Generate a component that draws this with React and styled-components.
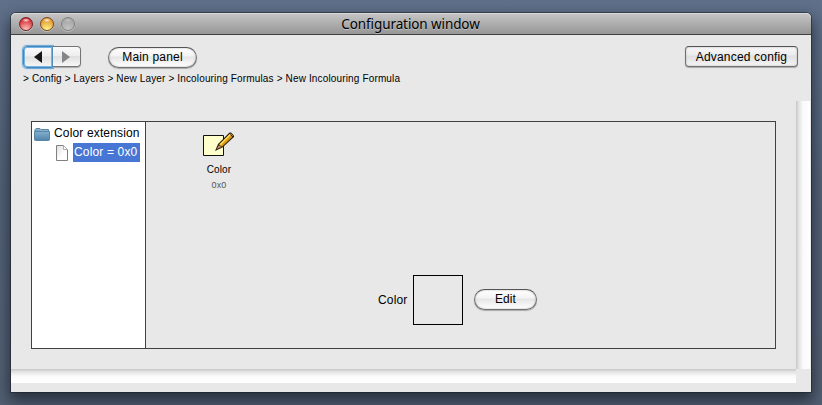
import React from "react";
import styled, { createGlobalStyle } from "styled-components";

const GlobalStyle = createGlobalStyle`
  * { box-sizing: border-box; }
  body {
    margin: 0;
    overflow: hidden;
    font-family: "Liberation Sans", Arial, sans-serif;
    font-size: 12px;
    color: #000;
  }
`;

const Desktop = styled.main`
  width: 822px;
  height: 405px;
  padding: 13px 11px;
  overflow: hidden;
  background: linear-gradient(#60708a, #556379 45%, #536074);
`;

const Window = styled.section`
  width: 800px;
  height: 379px;
  display: flex;
  flex-direction: column;
  background: #e8e8e8;
  border-radius: 5px 5px 0 0;
  box-shadow: 0 0 0 1px rgba(25, 32, 42, 0.55), 0 7px 15px 2px rgba(12, 18, 24, 0.62);
`;

const TitleBar = styled.header`
  flex: none;
  height: 22px;
  display: grid;
  grid-template-columns: 64px 1fr 64px;
  align-items: center;
  border-radius: 5px 5px 0 0;
  border-bottom: 1px solid #404040;
  background: linear-gradient(#c6c6c6, #969696);
  box-shadow: inset 0 1px #dadada;
`;

const Lights = styled.div`
  display: flex;
  gap: 7px;
  padding-left: 8px;
`;

const Light = styled.i`
  width: 14px;
  height: 14px;
  border-radius: 50%;
  border: 1px solid ${(p) => p.$edge};
  background:
    radial-gradient(ellipse 4px 2px at 50% 18%, ${(p) => p.$shine}, transparent),
    radial-gradient(circle at 50% 95%, ${(p) => p.$glow}, ${(p) => p.$tone} 90%);
  box-shadow: 0 1px rgba(255, 255, 255, 0.35);
`;

const Title = styled.h1`
  margin: 0;
  text-align: center;
  font: 400 13.5px/20px "Noto Sans", sans-serif;
  letter-spacing: -0.1px;
  text-indent: -1px;
  text-shadow: 0 1px rgba(255, 255, 255, 0.35);
`;

const Toolbar = styled.nav`
  height: 36px;
  display: flex;
  align-items: flex-start;
  padding: 11px 13px 0 12px;
`;

const NavGroup = styled.div`
  display: flex;
  margin-right: 27px;
`;

const NavButton = styled.button`
  width: ${(p) => (p.$focused ? 30 : 28)}px;
  height: ${(p) => (p.$focused ? 22 : 21)}px;
  display: flex;
  align-items: center;
  justify-content: center;
  padding: 0 ${(p) => (p.$focused ? 0 : 2)}px 0 0;
  border: ${(p) => (p.$focused ? "1px solid #4688bd" : "1px solid #757575")};
  border-left-width: ${(p) => (p.$focused ? 1 : 0)}px;
  border-radius: ${(p) => (p.$focused ? "4px 0 0 4px" : "0 4px 4px 0")};
  background: linear-gradient(#fafafa, #eeeeee 45%, #e0e0e0 50%, #f7f7f7);
  box-shadow: ${(p) => (p.$focused ? "0 0 1px 1px #62a4d6, inset 0 0 0 1px #75b5e1" : "0 1px 1px #aaa")};
`;

const Button = styled.button`
  width: ${(p) => p.$width}px;
  height: 21px;
  flex: none;
  margin-top: ${(p) => p.$drop || 0}px;
  padding: ${(p) => (p.$square ? "1px 0 0" : "0 0 1px")};
  border: 1px solid #707070;
  border-top-color: #555;
  border-radius: ${(p) => (p.$square ? 4 : 11)}px;
  background: ${(p) =>
    p.$square
      ? "linear-gradient(#f8f8f8, #ececec 42%, #e0e0e0 48%, #f5f5f5)"
      : "linear-gradient(#ffffff, #f3f3f3 42%, #e5e5e5 47%, #ffffff)"};
  box-shadow: inset 0 0 2px #aaa, 0 1px 1px #aaa;
  font: 12px/18px "Liberation Sans", Arial, sans-serif;
  letter-spacing: ${(p) => p.$track || 0}px;
  color: #000;
  white-space: nowrap;
`;

const Spacer = styled.span`
  flex: 1;
`;

const Breadcrumb = styled.div`
  height: 30px;
  padding: 2px 0 0 12px;
  font-size: 10px;
  line-height: 12px;
  letter-spacing: 0.15px;
  white-space: nowrap;
`;

const ScrollPane = styled.div`
  height: 291px;
  display: grid;
  grid-template-columns: 785px 15px;
  grid-template-rows: 268px 23px;
`;

const Viewport = styled.div`
  padding: 20px;
`;

const VerticalTrack = styled.div`
  width: 14px;
  background: linear-gradient(90deg, #c6c6c6, #e3e3e3 20%, #fafafa 50%, #fff);
`;

const HorizontalTrack = styled.div`
  height: 14px;
  background: linear-gradient(#c6c6c6, #e3e3e3 20%, #fafafa 50%, #fff);
`;

const SplitPanel = styled.div`
  width: 745px;
  height: 228px;
  display: grid;
  grid-template-columns: 114px 1fr;
  border: 1px solid #404040;
`;

const Tree = styled.aside`
  padding: 2px 0 0 2px;
  background: #fff;
  border-right: 1px solid #404040;
`;

const TreeRow = styled.div`
  display: flex;
  align-items: center;
  height: 19px;
  padding-left: ${(p) => p.$indent || 0}px;
  white-space: nowrap;
`;

const TreeLabel = styled.span`
  height: 19px;
  line-height: 19px;
  padding: 0 ${(p) => (p.$selected ? 3 : 0)}px 0 1px;
  margin-left: ${(p) => (p.$selected ? 5 : 3)}px;
  letter-spacing: 0.15px;
  background: ${(p) => (p.$selected ? "#4876d5" : "transparent")};
  color: ${(p) => (p.$selected ? "#fff" : "#000")};
`;

const Detail = styled.div`
  display: flex;
  flex-direction: column;
`;

const ItemCard = styled.div`
  width: 80px;
  height: 153px;
  margin-left: 33px;
  padding-top: 9px;
  display: flex;
  flex-direction: column;
  align-items: center;
  font-size: 10px;
  line-height: 12px;
`;

const ItemName = styled.span`
  margin-top: 7px;
  letter-spacing: 0.1px;
`;

const ItemValue = styled.span`
  margin-top: 4px;
  font-size: 9px;
  line-height: 11px;
  letter-spacing: 0.1px;
  color: #555;
`;

const Field = styled.div`
  display: flex;
  align-items: center;
  padding-left: 232px;
`;

const Swatch = styled.div`
  width: 50px;
  height: 50px;
  margin: 0 11px 0 5px;
  border: 1px solid #000;
`;

const FieldLabel = styled.span`
  width: 30px;
  letter-spacing: 0.15px;
  white-space: nowrap;
`;

function Triangle({ right }) {
  return (
    <svg width="10" height="14" viewBox="0 0 10 14">
      <path d={right ? "M1 1L9 7L1 13Z" : "M9 1L1 7L9 13Z"} fill={right ? "#858585" : "#161616"} />
    </svg>
  );
}

function FolderIcon() {
  return (
    <svg width="16" height="14" viewBox="0 0 16 14">
      <defs>
        <linearGradient id="folder" x2="0" y2="1">
          <stop stopColor="#86b0cd" />
          <stop offset="1" stopColor="#4f83aa" />
        </linearGradient>
      </defs>
      <path d="M1 4V2.5L2 1.5H6L7 2.5H14.5V5Z" fill="#8db2ca" stroke="#5986a5" />
      <path d="M.5 4.5H15.5V12.5Q15.5 13.5 14.5 13.5H1.5Q.5 13.5 .5 12.5Z" fill="url(#folder)" stroke="#5685a5" />
    </svg>
  );
}

function FileIcon() {
  return (
    <svg width="12" height="16" viewBox="0 0 12 16">
      <defs>
        <linearGradient id="page" x1="0" y1="0" x2="1" y2="1">
          <stop stopColor="#dedede" />
          <stop offset=".6" stopColor="#fff" />
        </linearGradient>
      </defs>
      <path d="M.5 .5H7.5L11.5 4.5V15.5H.5Z" fill="url(#page)" stroke="#808080" />
      <path d="M7.5 .5V4.5H11.5Z" fill="#fff" stroke="#aaa" />
    </svg>
  );
}

function NoteIcon() {
  return (
    <svg width="32" height="26" viewBox="0 0 32 26">
      <path d="M.5 4.5H20.5V24.5H.5Z" fill="#ffffcc" stroke="#111" />
      <path d="M12 20L15 13L26.5 1.5H28L31 4.5V6L19.5 16.5Z" fill="#292010" />
      <path d="M16.2 13.7L26.7 3.2L29.4 5.9L19 15.8Z" fill="#d8980f" />
      <path d="M17 13.8L27.3 3.5" stroke="#ffdb4d" strokeWidth="1.7" />
      <path d="M13.8 18L15.8 14.2L18.4 16Z" fill="#c48c69" />
      <path d="M27.5 2.5L30 5" stroke="#a98043" />
    </svg>
  );
}

export default function App() {
  return (
    <Desktop>
      <GlobalStyle />
      <Window>
        <TitleBar>
          <Lights>
            <Light $edge="#702426" $tone="#cf1520" $glow="#ffc5bd" $shine="rgba(255,255,255,.9)" />
            <Light $edge="#7b4b23" $tone="#df8820" $glow="#fff58c" $shine="rgba(255,255,255,.9)" />
            <Light $edge="#828282" $tone="#a0a0a0" $glow="#c5c5c5" $shine="rgba(255,255,255,.3)" />
          </Lights>
          <Title>Configuration window</Title>
        </TitleBar>
        <Toolbar>
          <NavGroup>
            <NavButton $focused aria-label="Back"><Triangle /></NavButton>
            <NavButton aria-label="Forward"><Triangle right /></NavButton>
          </NavGroup>
          <Button $width={89} $drop={1} $track={0.18}>Main panel</Button>
          <Spacer />
          <Button $width={113} $square $track={0.18}>Advanced config</Button>
        </Toolbar>
        <Breadcrumb>&gt; Config &gt; Layers &gt; New Layer &gt; Incolouring Formulas &gt; New Incolouring Formula</Breadcrumb>
        <ScrollPane>
          <Viewport>
            <SplitPanel>
              <Tree>
                <TreeRow><FolderIcon /><TreeLabel>Color extension</TreeLabel></TreeRow>
                <TreeRow $indent={22}><FileIcon /><TreeLabel $selected>Color = 0x0</TreeLabel></TreeRow>
              </Tree>
              <Detail>
                <ItemCard>
                  <NoteIcon />
                  <ItemName>Color</ItemName>
                  <ItemValue>0x0</ItemValue>
                </ItemCard>
                <Field>
                  <FieldLabel>Color</FieldLabel>
                  <Swatch />
                  <Button $width={63} $drop={-2} $track={0.1}>Edit</Button>
                </Field>
              </Detail>
            </SplitPanel>
          </Viewport>
          <VerticalTrack />
          <HorizontalTrack />
        </ScrollPane>
      </Window>
    </Desktop>
  );
}
